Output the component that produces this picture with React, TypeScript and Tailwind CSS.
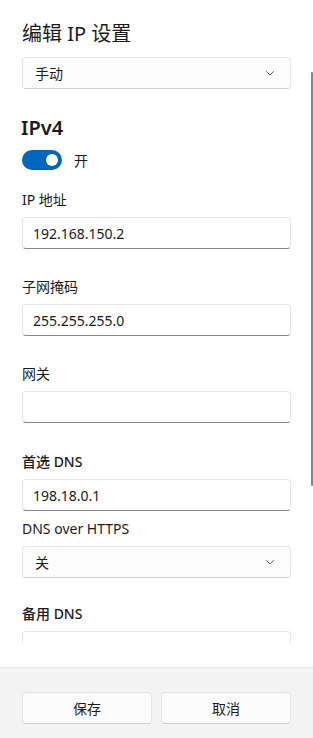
import { FC } from "react"

const font = { fontFamily: '"Noto Sans", "Noto Sans CJK SC", sans-serif' }

const Chevron: FC = () => (
  <svg width="10" height="10" viewBox="0 0 10 10" className="text-[#5f5f5f]">
    <path d="M1.5 3.5 L5 7 L8.5 3.5" fill="none" stroke="currentColor" strokeWidth="1" strokeLinecap="round" strokeLinejoin="round" />
  </svg>
)

const Field: FC<{ value?: string }> = ({ value }) => (
  <div className="h-[32px] shrink-0 bg-white border border-[#e6e6e6] border-b-[#8a8a8a] rounded-[4px] flex items-center px-[10px] text-[14px] text-[#1b1b1b]">
    {value}
  </div>
)

const Combo: FC<{ value: string }> = ({ value }) => (
  <div className="h-[32px] shrink-0 bg-[#fdfdfd] border border-[#e6e6e6] border-b-[#d2d2d2] rounded-[4px] flex items-center justify-between pl-[12px] pr-[15px] text-[14px] text-[#1b1b1b]">
    <span>{value}</span>
    <Chevron />
  </div>
)

const Label: FC<{ text: string; bold?: boolean; className?: string }> = ({ text, bold, className }) => (
  <p className={`h-[20px] shrink-0 leading-[20px] text-[14px] text-[#1b1b1b] mb-[7px] ${bold ? "font-medium" : ""} ${className || ""}`}>
    {text}
  </p>
)

const App: FC = () => {
  return (
    <div style={font} className="w-[313px] h-[738px] bg-white flex flex-col relative overflow-hidden">

      {/* Scroll Area */}
      <div className="h-[667px] shrink-0">
        <div className="h-[643px] overflow-hidden px-[22px] pt-[20px] flex flex-col">
          <h1 className="h-[28px] leading-[28px] text-[20px] text-[#1b1b1b] mb-[9px]">编辑 IP 设置</h1>
          <Combo value="手动" />

          <h2 className="mt-[25px] h-[28px] leading-[28px] text-[20px] font-semibold text-[#1b1b1b] -ml-px">IPv4</h2>

          <div className="mt-[8px] flex items-center gap-[12px] h-[20px]">
            <div className="w-[40px] h-[20px] rounded-full bg-[#0067c0] flex items-center justify-end pr-[4px]">
              <div className="w-[12px] h-[12px] rounded-full bg-white" />
            </div>
            <span className="text-[14px] text-[#1b1b1b]">开</span>
          </div>

          <Label text="IP 地址" className="mt-[20px]" />
          <Field value="192.168.150.2" />

          <Label text="子网掩码" className="mt-[28px]" />
          <Field value="255.255.255.0" />

          <Label text="网关" className="mt-[28px]" />
          <Field />

          <Label text="首选 DNS" bold className="mt-[29px]" />
          <Field value="198.18.0.1" />

          <Label text="DNS over HTTPS" className="mt-[8px]" />
          <Combo value="关" />

          <Label text="备用 DNS" bold className="mt-[26px]" />
          <Field />
        </div>
      </div>

      {/* Scrollbar */}
      <div className="absolute left-[311px] top-[72px] w-[2px] h-[414px] rounded-full bg-[#868686]" />

      {/* Footer */}
      <div className="flex-1 bg-[#f3f3f3] border-t border-[#e5e5e5] px-[22px] pt-[24px] flex gap-[9px]">
        <button className="flex-1 h-[32px] bg-[#fbfbfb] border border-[#e5e5e5] border-b-[#cfcfcf] rounded-[4px] text-[14px] text-[#1b1b1b]">保存</button>
        <button className="flex-1 h-[32px] bg-[#fbfbfb] border border-[#e5e5e5] border-b-[#cfcfcf] rounded-[4px] text-[14px] text-[#1b1b1b]">取消</button>
      </div>
    </div>
  )
}

export default App
